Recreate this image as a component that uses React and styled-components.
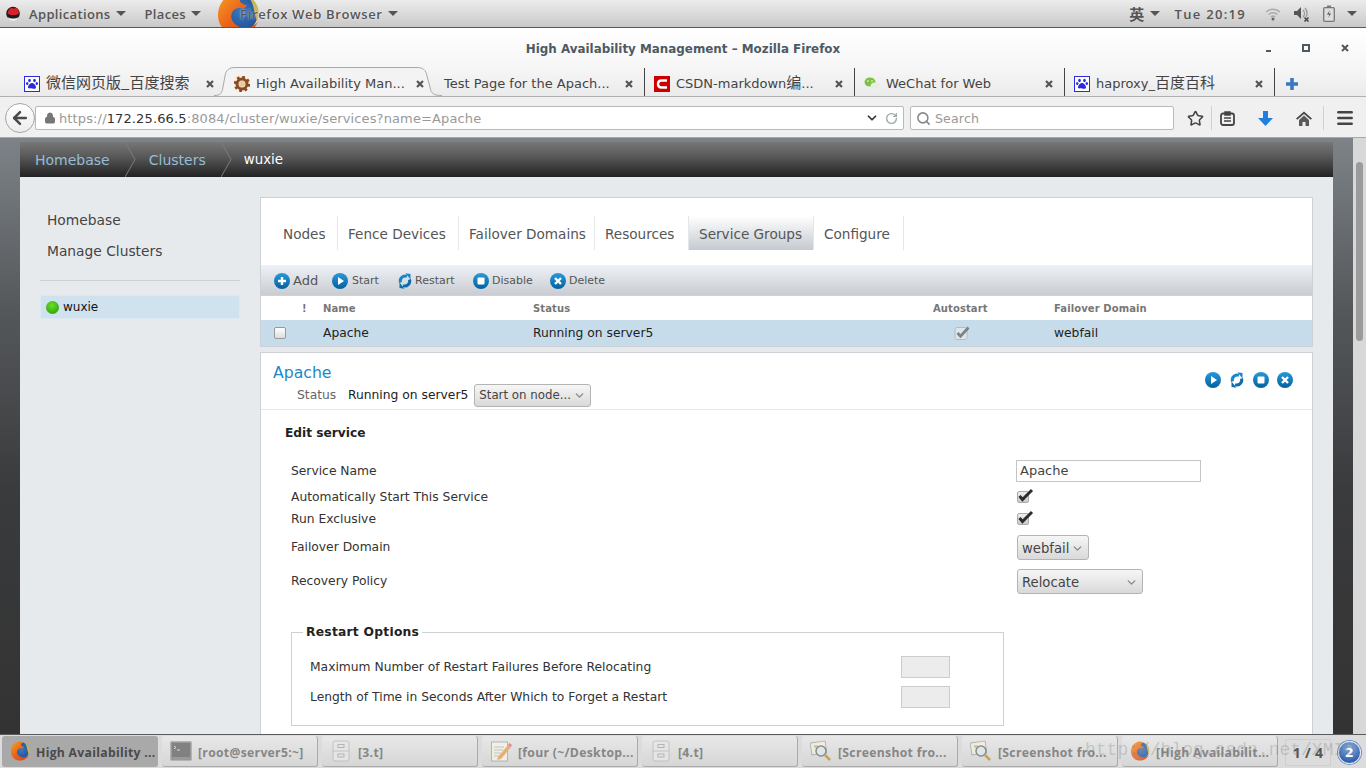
import styled, { createGlobalStyle } from "styled-components";
import { Star, Menu as MenuIcon, Search, Lock, ChevronDown, RotateCw, ArrowLeft } from "lucide-react";

const Global = createGlobalStyle`
  html, body { margin: 0; padding: 0; height: 100%; overflow: hidden; }
  * { box-sizing: border-box; }
  body { font-family: "DejaVu Sans", sans-serif; }
  svg { flex: none; }
`;

const Screen = styled.div`
  position: relative;
  width: 1366px;
  height: 768px;
  display: flex;
  flex-direction: column;
  overflow: hidden;
  background: #fff;
`;

// 상단 패널
const TopBar = styled.div`
  position: relative;
  height: 28px;
  flex: none;
  display: flex;
  align-items: center;
  padding: 0 9px 0 6px;
  overflow: hidden;
  background: linear-gradient(#ececec, #c9c9c9);
  border-bottom: 1px solid #585858;
  font-family: "Open Sans", sans-serif;
  font-weight: 600;
  font-size: 13px;
  letter-spacing: 0.35px;
  color: #555;
`;

const PanelItem = styled.span`
  position: relative;
  display: flex;
  align-items: center;
  gap: 5px;
  margin-left: ${(p) => p.$ml || 0}px;
  white-space: nowrap;
  z-index: 1;
  letter-spacing: ${(p) => (p.$halo ? "0.65px" : "inherit")};
  text-shadow: ${(p) => (p.$halo ? "0 0 2px rgba(255, 255, 255, 0.9)" : "none")};
`;

const PanelCjk = styled.span`
  font-family: "Noto Sans CJK SC", sans-serif;
  font-size: 15px;
`;

const PanelClock = styled.span`
  letter-spacing: 1.3px;
`;

const PanelArrow = styled.i`
  width: 0;
  height: 0;
  border-left: 5px solid transparent;
  border-right: 5px solid transparent;
  border-top: 5px solid #555;
`;

const PanelRight = styled.div`
  margin-left: auto;
  display: flex;
  align-items: center;
`;

const PanelLogo = styled.div`
  position: absolute;
  left: 216px;
  top: -8px;
`;

const Browser = styled.div`
  flex: 1;
  min-height: 0;
  display: flex;
  flex-direction: column;
`;

const TitleBar = styled.div`
  position: relative;
  height: 40px;
  flex: none;
  display: flex;
  align-items: flex-end;
  justify-content: center;
  padding-bottom: 12px;
  background: linear-gradient(#fff, #f6f6f6);
  font-weight: bold;
  font-size: 11.9px;
  color: #4d5a63;
`;

const WinButtons = styled.div`
  position: absolute;
  right: 0;
  top: 16px;
  width: 100px;
  height: 12px;
`;

const TabStrip = styled.div`
  height: 29px;
  flex: none;
  display: flex;
  padding-left: 15px;
  background: linear-gradient(#f6f6f6, #ebebeb);
  border-bottom: 1px solid #b0b0b0;
`;

const Tab = styled.div`
  position: relative;
  width: 210px;
  height: 28px;
  display: flex;
  align-items: center;
  padding: 3px 9px 0;
  gap: 6px;
  font-size: 13px;
  color: #444;
  white-space: nowrap;
  border-right: ${(p) => (p.$divider ? "1px solid #444" : "none")};
`;

const TabIcon = styled.span`
  position: relative;
  display: flex;
`;

const TabText = styled.span`
  position: relative;
  flex: 1;
  min-width: 0;
  line-height: 18px;
  font-family: "DejaVu Sans", "Noto Sans CJK SC", sans-serif;
`;

const TabCjk = styled.span`
  font-family: "Noto Sans CJK SC", sans-serif;
  font-size: 15px;
  line-height: 1;
`;

const TabClose = styled.span`
  position: absolute;
  right: 10px;
  top: 11px;
  display: flex;
`;

const TabShape = styled.svg`
  position: absolute;
  left: -11px;
  top: -1px;
`;

const TabPlus = styled.div`
  margin: 8px 0 0 10px;
`;

const NavBar = styled.div`
  height: 41px;
  flex: none;
  display: flex;
  align-items: flex-start;
  padding: 9px 0 0 35px;
  background: #f0f0f0;
  border-bottom: 1px solid #a8a8a8;
`;

const BackButton = styled.div`
  position: absolute;
  left: 5px;
  top: 103px;
  width: 30px;
  height: 30px;
  display: flex;
  align-items: center;
  justify-content: center;
  border-radius: 50%;
  border: 1px solid #a4a4a4;
  background: linear-gradient(#fff, #ededed);
  color: #4a4a4a;
`;

const UrlBox = styled.div`
  width: 869px;
  height: 24px;
  flex: none;
  display: flex;
  align-items: center;
  padding: 0 5px 0 8px;
  background: #fff;
  border: 1px solid #b9b9b9;
  border-radius: 2px;
  font-size: 13px;
  letter-spacing: 0.13px;
  color: #999;
  white-space: nowrap;
`;

const UrlHost = styled.span`
  color: #333;
`;

const UrlTools = styled.div`
  margin-left: auto;
  display: flex;
  align-items: center;
  gap: 6px;
  color: #333;
`;

const SearchBox = styled(UrlBox)`
  width: 264px;
  margin-left: 6px;
  padding-left: 5px;
  gap: 4px;
  font-size: 12.6px;
`;

const NavIcon = styled.div`
  flex: none;
  display: flex;
  align-items: center;
  justify-content: center;
  height: 24px;
  width: ${(p) => p.$w}px;
  color: #444;
  border-right: ${(p) => (p.$line ? "1px solid #d0d0d0" : "none")};
`;

// 페이지 영역
const PageWrap = styled.div`
  flex: 1;
  min-height: 0;
  display: flex;
  background: linear-gradient(#7d8388 0, #55585b 170px, #3a3b3d 350px, #333 100%);
`;

const PageColumn = styled.div`
  width: 1313px;
  margin-left: 20px;
  margin-top: 4px;
  display: flex;
  flex-direction: column;
`;

const Breadcrumb = styled.div`
  height: 35px;
  flex: none;
  display: flex;
  align-items: center;
  padding-left: 15px;
  background: linear-gradient(#777, #5a5a5a 40%, #222);
  font-size: 14px;
`;

const Crumb = styled.span`
  color: ${(p) => (p.$current ? "#fff" : "#94bdd8")};
  font-size: ${(p) => (p.$current ? "13.4px" : "inherit")};
  margin-left: ${(p) => (p.$current ? "-1px" : "0")};
`;

const CrumbSep = styled.svg`
  flex: none;
  margin: 0 13px 0 15px;
`;

const PageBody = styled.div`
  flex: 1;
  min-height: 0;
  display: flex;
  padding-top: 20px;
  background: #e7eaed;
`;

const Sidebar = styled.div`
  width: 240px;
  flex: none;
  padding: 8px 20px 0;
`;

const SideLink = styled.div`
  height: 31px;
  line-height: 31px;
  padding-left: 7px;
  font-size: 13.8px;
  color: #444;
`;

const SideDivider = styled.div`
  height: 1px;
  margin-top: 13px;
  background: #ccd1d6;
`;

const ClusterRow = styled.div`
  height: 24px;
  margin-top: 14px;
  display: flex;
  align-items: center;
  gap: 4px;
  padding-left: 5px;
  background: #d0e2ee;
  border: 1px solid #dce9f2;
  font-size: 12px;
  color: #111;
`;

const StatusDot = styled.i`
  width: 13px;
  height: 13px;
  border-radius: 50%;
  background: radial-gradient(circle at 45% 35%, #6be02c, #2eaa06 75%);
`;

const Main = styled.div`
  width: 1053px;
  flex: none;
`;

const Panel = styled.div`
  background: #fff;
  border: 1px solid #cdd1d5;
  margin-top: ${(p) => p.$mt || 0}px;
  height: ${(p) => (p.$h ? `${p.$h}px` : "auto")};
`;

const NavTabs = styled.div`
  height: 67px;
  display: flex;
  padding: 18px 0 0 12px;
`;

const NavTab = styled.div`
  width: ${(p) => p.$w}px;
  height: 34px;
  line-height: 36px;
  padding-left: 10px;
  font-size: 13.6px;
  color: #555;
  white-space: nowrap;
  background: ${(p) => (p.$active ? "linear-gradient(#fff, #c4cacf)" : "none")};
  border-right: 1px solid #e4e7ea;
`;

const Toolbar = styled.div`
  height: 31px;
  display: flex;
  align-items: center;
  background: linear-gradient(#eef2f8, #c9cdd1);
  border-bottom: 1px solid #d0d3d6;
  padding: 1px 0 0 13px;
`;

const ToolItem = styled.div`
  display: flex;
  align-items: center;
  gap: ${(p) => p.$gap || 4}px;
  width: ${(p) => p.$w}px;
  font-size: ${(p) => p.$size || 11}px;
  color: #555;
`;

const TableRow = styled.div`
  display: grid;
  grid-template-columns: 62px 210px 400px 121px 1fr;
  align-items: center;
  height: ${(p) => p.$h}px;
`;

const HeadRow = styled(TableRow)`
  font-size: 10px;
  font-weight: bold;
  letter-spacing: 0.1px;
  color: #777;
`;

const BodyRow = styled(TableRow)`
  background: #c7dcea;
  font-size: 12.3px;
  color: #222;
`;

const HeadBang = styled.span`
  padding-left: 41px;
`;

const RowCheck = styled.i`
  display: block;
  width: 12px;
  height: 12px;
  margin-left: 13px;
  background: linear-gradient(#fff, #ddd);
  border: 1px solid #999;
  border-radius: 2px;
`;

const AutoCell = styled.div`
  padding-left: 21px;
  display: flex;
`;

const DetailHead = styled.div`
  height: 57px;
  display: flex;
  align-items: center;
  justify-content: space-between;
  padding: 0 19px 0 12px;
  border-bottom: 1px solid #e4e6e8;
`;

const DetailTitle = styled.div`
  font-size: 15.7px;
  line-height: 20px;
  margin-top: 8px;
  color: #1e88c8;
`;

const StatusLine = styled.div`
  display: flex;
  align-items: center;
  height: 24px;
  margin: 0 0 0 24px;
  font-size: 12.3px;
  color: #222;
`;

const StatusLabel = styled.span`
  width: 51px;
  color: #666;
`;

const ActionIcons = styled.div`
  display: flex;
  gap: 8px;
  margin-top: -2px;
`;

const Dropdown = styled.div`
  display: flex;
  align-items: center;
  justify-content: space-between;
  width: ${(p) => p.$w}px;
  height: ${(p) => p.$h || 25}px;
  margin-left: ${(p) => p.$ml || 0}px;
  padding: ${(p) => (p.$size ? "0 4px" : "2px 4px 0")};
  background: linear-gradient(#f6f6f6, #d9d9d9);
  border: 1px solid #b4b4b4;
  border-radius: 3px;
  font-size: ${(p) => p.$size || 13.2}px;
  color: #444;
  white-space: nowrap;
`;

const DetailBody = styled.div`
  padding: 14px 0 0 24px;
`;

const EditHeading = styled.div`
  font-size: 12.2px;
  font-weight: bold;
  line-height: 18px;
  color: #222;
`;

const Form = styled.div`
  margin: 15px 0 0 6px;
`;

const FormRow = styled.div`
  display: grid;
  grid-template-columns: 725px 1fr;
  align-items: center;
  height: ${(p) => p.$h}px;
  font-size: 12.3px;
  color: #333;
`;

const TextBox = styled.div`
  width: 185px;
  height: 22px;
  line-height: 20px;
  padding-left: 3px;
  background: #fff;
  border: 1px solid #c4c4c4;
  font-size: 13px;
  color: #444;
`;

const FormCheck = styled.div`
  position: relative;
  width: 12px;
  height: 12px;
  margin-left: 1px;
  background: linear-gradient(#eee, #ccc);
  border: 1px solid #aaa;
  border-radius: 2px;
`;

const FormCheckMark = styled.svg`
  position: absolute;
  left: 0;
  top: -4px;
`;

const OptionBox = styled.fieldset`
  width: 713px;
  margin: 28px 0 0 0;
  padding: 13px 0 0 18px;
  height: 101px;
  border: 1px solid #cdd1d5;
`;

const OptionLegend = styled.legend`
  margin-left: -7px;
  padding: 0 3px;
  font-size: 12.3px;
  font-weight: bold;
  letter-spacing: 0.25px;
  color: #222;
`;

const OptionRow = styled.div`
  display: grid;
  grid-template-columns: 591px 1fr;
  align-items: center;
  height: 30px;
  font-size: 12.3px;
  color: #333;
`;

const GreyBox = styled.div`
  width: 49px;
  height: 22px;
  background: #ececec;
  border: 1px solid #ccc;
`;

const ScrollTrack = styled.div`
  width: 13px;
  margin-left: 20px;
  flex: none;
  padding: 24px 3px 0;
  background: #d8d8d8;
`;

const ScrollThumb = styled.div`
  height: 179px;
  border-radius: 4px;
  background: #9b9b9b;
`;

// 하단 작업 표시줄
const TaskBar = styled.div`
  position: relative;
  height: 34px;
  flex: none;
  display: flex;
  gap: 4px;
  padding: 1px 0 0 2px;
  background: #dcdcdc;
  border-top: 1px solid #5a5a5a;
  font-family: "Open Sans", sans-serif;
  font-weight: 700;
  font-size: 12.2px;
  letter-spacing: 0.3px;
`;

const TaskButton = styled.div`
  width: 156px;
  height: 31px;
  flex: none;
  display: flex;
  align-items: center;
  gap: 6px;
  padding: 2px 0 0 8px;
  white-space: nowrap;
  overflow: hidden;
  border-radius: 3px;
  background: ${(p) => (p.$active ? "#a9a9a9" : "linear-gradient(#e8e8e8, #d6d6d6)")};
  border-right: 1px solid #aaa;
  border-bottom: 1px solid #aaa;
  color: ${(p) => (p.$active ? "#4a4a4a" : "#868686")};

  svg {
    opacity: ${(p) => (p.$active ? 1 : 0.8)};
    margin-top: -2px;
  }
`;

const Pager = styled.div`
  width: 46px;
  height: 27px;
  margin: 3px 0 0 3px;
  flex: none;
  display: flex;
  align-items: center;
  justify-content: center;
  border: 1px solid #cfcfcf;
  color: #555;
  font-size: 14px;
`;

const Badge = styled.div`
  width: 23px;
  height: 23px;
  flex: none;
  margin: 5px 0 0 3px;
  display: flex;
  align-items: center;
  justify-content: center;
  border-radius: 50%;
  border: 1px solid #e4ecf6;
  box-shadow: 0 0 0 1px #6f8fbe;
  background: radial-gradient(circle at 50% 25%, #89aee0, #2f62ad 75%);
  font-family: "DejaVu Sans", sans-serif;
  font-size: 13px;
  font-weight: bold;
  color: #fff;
`;

const Watermark = styled.div`
  position: absolute;
  left: 1085px;
  top: 5px;
  font-family: "Liberation Mono", monospace;
  font-weight: normal;
  font-size: 18px;
  letter-spacing: 0;
  color: rgba(120, 120, 120, 0.3);
  white-space: nowrap;
`;

const FirefoxLogo = ({ size, idPrefix }) => (
  <svg width={size} height={size} viewBox="0 0 44 44">
    <defs>
      <radialGradient id={`${idPrefix}Blue`} cx="0.55" cy="0.45" r="0.6">
        <stop offset="0" stopColor="#3a78c2" />
        <stop offset="1" stopColor="#1f4b8e" />
      </radialGradient>
      <linearGradient id={`${idPrefix}Orange`} x1="0" y1="0" x2="1" y2="1">
        <stop offset="0" stopColor="#f7a11f" />
        <stop offset="0.5" stopColor="#e9611c" />
        <stop offset="1" stopColor="#d2461a" />
      </linearGradient>
    </defs>
    <circle cx="23" cy="21" r="19" fill={`url(#${idPrefix}Blue)`} />
    <path d="M32 4c7 4 11 10 10.500 18-.3 4-1 6-1.500 8l-3-12c-1-6-3-10-6-14z" fill="#c9b75a" />
    <path
      d="M20 1C9 3 2 12 2 23c0 12 9 20 20 20 9 0 16-5 20-13-6 6-14 8-20 4-6-3-8-9-6-13 1-3 4-5 8-5 3 1 6 0 7-3-2 0-6-1-7-4 0-2 2-4 5-5-2-2-6-3-9-3z"
      fill={`url(#${idPrefix}Orange)`}
    />
  </svg>
);

const RedHat = () => (
  <svg width="14" height="15" viewBox="0 0 14 15">
    <circle cx="7" cy="7.500" r="6.800" fill="#1c1c1c" />
    <path d="M1.500 11c3.500 2 8 2 11 0-1 2.500-3 3.800-5.500 3.800S2.500 13.500 1.500 11z" fill="#f4f4f4" />
    <path d="M1.500 7.500C2 4 4 2 5.500 2s1.300.6 2.300.6S9.500 1.600 10.500 2s2.500 3 2.500 5.500c-3 2-8.500 2-11.500 0z" fill="#d9232a" />
  </svg>
);

const CloseX = ({ color = "#555" }) => (
  <svg width="10" height="10" viewBox="0 0 10 10">
    <path d="M2 2l6 6M8 2l-6 6" stroke={color} strokeWidth="2.200" />
  </svg>
);

const BaiduIcon = () => (
  <svg width="16" height="16" viewBox="0 0 16 16">
    <rect x="0.500" y="0.500" width="15" height="15" fill="#fff" stroke="#2a2ae0" />
    <g fill="#2a2ae0">
      <ellipse cx="5.500" cy="4.500" rx="1.300" ry="1.800" />
      <ellipse cx="10.500" cy="4.500" rx="1.300" ry="1.800" />
      <ellipse cx="3.200" cy="7.500" rx="1.200" ry="1.500" />
      <ellipse cx="12.800" cy="7.500" rx="1.200" ry="1.500" />
      <path d="M8 7c2 0 4 2.500 4 4.500 0 1.500-2 1.500-4 1s-4 .5-4-1C4 9.500 6 7 8 7z" />
    </g>
  </svg>
);

const GearIcon = () => (
  <svg width="16" height="16" viewBox="0 0 16 16">
    <rect width="16" height="16" fill="#f6f0e6" />
    <circle cx="8" cy="8" r="5" fill="none" stroke="#8a4a22" strokeWidth="3" />
    <circle cx="8" cy="8" r="7" fill="none" stroke="#8a4a22" strokeWidth="2.400" strokeDasharray="2.700 2.800" />
    <circle cx="8" cy="8" r="3" fill="#e9c9a0" />
  </svg>
);

const CsdnIcon = () => (
  <svg width="16" height="16" viewBox="0 0 16 16">
    <rect width="16" height="16" fill="#cc0000" />
    <path d="M13 4.500H7.500C5 4.500 4 6 4 8s1 3.500 3.500 3.500H13" fill="none" stroke="#fff" strokeWidth="2.400" />
  </svg>
);

const WechatIcon = () => (
  <svg width="16" height="16" viewBox="0 0 16 16">
    <ellipse cx="6" cy="6" rx="5.500" ry="4.500" fill="#7dc242" />
    <ellipse cx="11" cy="10" rx="4.500" ry="3.500" fill="#e8eee4" />
    <circle cx="4" cy="5" r="0.800" fill="#fff" />
    <circle cx="8" cy="5" r="0.800" fill="#fff" />
  </svg>
);

const HomeIcon = () => (
  <svg width="16" height="15" viewBox="0 0 16 15">
    <path d="M8 .5L0 7.500l1.300 1.300L8 3l6.700 5.800L16 7.500z" fill="#4a4a4a" />
    <path d="M3 9l5-4.500L13 9v6H9.500v-4h-3v4H3z" fill="#5a5a5a" />
  </svg>
);

const TickMark = () => (
  <FormCheckMark width="16" height="14" viewBox="0 0 16 14">
    <path d="M1.500 8l3 3.500L14 2" fill="none" stroke="#2a2d30" strokeWidth="3" />
  </FormCheckMark>
);

// 파란 원형 액션 아이콘
const ActionIcon = ({ kind, size = 16 }) => {
  const id = `blue-${kind}-${size}`;
  if (kind === "restart") {
    return (
      <svg width={size} height={size} viewBox="0 0 16 16">
        <path d="M3.500 9.500A5 5 0 0 1 10 3.300" fill="none" stroke="#1a86c8" strokeWidth="3" />
        <path d="M8.500 .2L13.500 1v5.500z" fill="#1a86c8" />
        <path d="M12.500 6.500A5 5 0 0 1 6 12.700" fill="none" stroke="#0d6cab" strokeWidth="3" />
        <path d="M7.500 15.800L2.500 15V9.500z" fill="#0d6cab" />
      </svg>
    );
  }
  return (
    <svg width={size} height={size} viewBox="0 0 16 16">
      <defs>
        <linearGradient id={id} x1="0" y1="0" x2="0" y2="1">
          <stop offset="0" stopColor="#2a9ad8" />
          <stop offset="1" stopColor="#04609f" />
        </linearGradient>
      </defs>
      <circle cx="8" cy="8" r="8" fill={`url(#${id})`} />
      {kind === "add" && <path d="M8 4v8M4 8h8" stroke="#fff" strokeWidth="2.400" />}
      {kind === "play" && <path d="M6 4l6 4-6 4z" fill="#fff" />}
      {kind === "stop" && <rect x="4.500" y="4.500" width="7" height="7" rx="1" fill="#fff" />}
      {kind === "delete" && <path d="M5 5l6 6M11 5l-6 6" stroke="#fff" strokeWidth="2.400" />}
    </svg>
  );
};

const TerminalIcon = () => (
  <svg width="22" height="20" viewBox="0 0 22 20">
    <rect x="0.500" y="0.500" width="21" height="19" rx="1" fill="#8a8a8a" stroke="#aaa" />
    <rect x="2" y="2" width="18" height="14" fill="#6a6a6a" />
    <path d="M4 5l2 1.500L4 8M7 9h3" stroke="#ddd" fill="none" />
  </svg>
);

const CabinetIcon = () => (
  <svg width="22" height="22" viewBox="0 0 22 22">
    <rect x="3" y="1" width="16" height="20" rx="2" fill="#e8e8e8" stroke="#bbb" />
    <path d="M3 11h16" stroke="#bbb" />
    <rect x="8" y="4.500" width="6" height="3" fill="none" stroke="#aaa" />
    <rect x="8" y="14" width="6" height="3" fill="none" stroke="#aaa" />
  </svg>
);

const NotepadIcon = () => (
  <svg width="22" height="22" viewBox="0 0 22 22">
    <rect x="1.500" y="2" width="16" height="19" fill="#f6f3e6" stroke="#aaa" />
    <path d="M4 7h10M4 10h9M4 13h7M4 16h6" stroke="#bbb" />
    <path d="M8 17l10-12 3 2-10 12-4 1z" fill="#e5a657" />
    <path d="M18 5l1.500-2 2.500 2-1 2z" fill="#d77" />
  </svg>
);

const ViewerIcon = () => (
  <svg width="22" height="22" viewBox="0 0 22 22">
    <rect x="1" y="2" width="15" height="12" transform="rotate(-8 8 8)" fill="#f3f0e0" stroke="#aaa" />
    <rect x="4" y="5" width="4" height="3" fill="#b7cf8c" />
    <circle cx="11" cy="11" r="5" fill="#dfe8ef" stroke="#777" strokeWidth="1.500" />
    <path d="M15 15l5 5" stroke="#c9922f" strokeWidth="2.500" />
  </svg>
);

const tabs = [
  { id: 1, icon: <BaiduIcon />, title: <TabCjk>微信网页版_百度搜索</TabCjk> },
  { id: 2, icon: <GearIcon />, title: "High Availability Man...", active: true },
  { id: 3, title: "Test Page for the Apach...", divider: true },
  { id: 4, icon: <CsdnIcon />, title: <>CSDN-markdown<TabCjk>编</TabCjk>...</>, divider: true },
  { id: 5, icon: <WechatIcon />, title: "WeChat for Web", divider: true },
  { id: 6, icon: <BaiduIcon />, title: <>haproxy_<TabCjk>百度百科</TabCjk></>, divider: true },
];

const navTabs = [
  { name: "Nodes", width: 65 },
  { name: "Fence Devices", width: 121 },
  { name: "Failover Domains", width: 136 },
  { name: "Resources", width: 94 },
  { name: "Service Groups", width: 125 },
  { name: "Configure", width: 90 },
];

const tasks = [
  { icon: <FirefoxLogo size={20} idPrefix="task1" />, title: "High Availability ...", active: true },
  { icon: <TerminalIcon />, title: "[root@server5:~]" },
  { icon: <CabinetIcon />, title: "[3.t]" },
  { icon: <NotepadIcon />, title: "[four (~/Desktop..." },
  { icon: <CabinetIcon />, title: "[4.t]" },
  { icon: <ViewerIcon />, title: "[Screenshot fro..." },
  { icon: <ViewerIcon />, title: "[Screenshot fro..." },
  { icon: <FirefoxLogo size={20} idPrefix="task2" />, title: "[High Availabilit..." },
];

function TabBackground() {
  return (
    <TabShape width="232" height="29" viewBox="0 0 232 29">
      <path
        d="M0 28.500C6 28.500 8 27 9 20L11 9C12 3 15 .5 21 .5H203C209 .5 212 3 213 9L216 20C217 27 220 28.500 228 28.500"
        fill="#f3f3f3"
        stroke="#a9a9a9"
      />
    </TabShape>
  );
}

function App() {
  return (
    <Screen>
      <Global />
      <TopBar>
        <PanelLogo>
          <FirefoxLogo size={44} idPrefix="panel" />
        </PanelLogo>
        <PanelItem>
          <RedHat />
        </PanelItem>
        <PanelItem $ml={9}>
          Applications <PanelArrow />
        </PanelItem>
        <PanelItem $ml={19}>
          Places <PanelArrow />
        </PanelItem>
        <PanelItem $ml={39} $halo>
          Firefox Web Browser <PanelArrow />
        </PanelItem>
        <PanelRight>
          <PanelItem>
            <PanelCjk>英</PanelCjk>
            <PanelArrow />
          </PanelItem>
          <PanelItem $ml={15}>
            <PanelClock>Tue 20:19</PanelClock>
          </PanelItem>
          <PanelItem $ml={19}>
            <svg width="16" height="14" viewBox="0 0 16 14">
              <path d="M1 5a10 10 0 0 1 14 0M3.500 7.500a6.500 6.500 0 0 1 9 0M6 10a3 3 0 0 1 4 0" fill="none" stroke="#aaa" strokeWidth="1.500" />
              <circle cx="8" cy="12" r="1.500" fill="#666" />
            </svg>
          </PanelItem>
          <PanelItem $ml={12}>
            <svg width="17" height="16" viewBox="0 0 17 16">
              <path d="M1 5h3l4-4v12l-4-4H1z" fill="#555" />
              <path d="M10 4a5 5 0 0 1 0 7M12 2a8 8 0 0 1 1 9" fill="none" stroke="#999" strokeWidth="1.300" />
              <path d="M11.500 11.500l4 4M15.500 11.500l-4 4" stroke="#444" strokeWidth="1.500" />
            </svg>
          </PanelItem>
          <PanelItem $ml={13}>
            <svg width="12" height="17" viewBox="0 0 12 17">
              <rect x="0.700" y="2.700" width="10.600" height="13.600" rx="1" fill="#ddd" stroke="#777" strokeWidth="1.300" />
              <rect x="4" y="0.500" width="4" height="2" fill="#777" />
              <path d="M7 5l-3 4.500h2.500L5 13l3-4.500H5.500z" fill="#444" />
            </svg>
          </PanelItem>
          <PanelItem $ml={12}>
            <PanelArrow />
          </PanelItem>
        </PanelRight>
      </TopBar>

      <Browser>
        <TitleBar>
          High Availability Management – Mozilla Firefox
          <WinButtons>
            <svg width="100" height="12" viewBox="0 0 100 12">
              <rect x="0" y="6" width="5" height="2" fill="#4d5a63" />
              <rect x="37" y="1" width="6" height="6" fill="none" stroke="#4d5a63" strokeWidth="2" />
              <path d="M76 1L82 7M82 1L76 7" stroke="#4d5a63" strokeWidth="2" />
            </svg>
          </WinButtons>
        </TitleBar>

        <TabStrip>
          {tabs.map((tab) => (
            <Tab key={tab.id} $divider={tab.divider}>
              {tab.active && <TabBackground />}
              {tab.icon && <TabIcon>{tab.icon}</TabIcon>}
              <TabText>{tab.title}</TabText>
              <TabClose>
                <CloseX />
              </TabClose>
            </Tab>
          ))}
          <TabPlus>
            <svg width="14" height="14" viewBox="0 0 14 14">
              <path d="M7 1v12M1 7h12" stroke="#3a78c2" strokeWidth="3.600" />
            </svg>
          </TabPlus>
        </TabStrip>

        <NavBar>
          <BackButton>
            <ArrowLeft size={20} strokeWidth={3} />
          </BackButton>
          <UrlBox>
            <Lock size={12} fill="#777" color="#777" style={{ marginRight: 3 }} />
            https://<UrlHost>172.25.66.5</UrlHost>:8084/cluster/wuxie/services?name=Apache
            <UrlTools>
              <ChevronDown size={14} strokeWidth={3} />
              <RotateCw size={13} strokeWidth={2.500} color="#9aa" />
            </UrlTools>
          </UrlBox>
          <SearchBox>
            <Search size={15} strokeWidth={2.500} color="#888" />
            Search
          </SearchBox>
          <NavIcon $w={38} $line>
            <Star size={17} strokeWidth={2.200} style={{ marginRight: -6 }} />
          </NavIcon>
          <NavIcon $w={31}>
            <svg width="15" height="15" viewBox="0 0 15 15">
              <rect x="1" y="2.500" width="13" height="11.500" rx="2" fill="none" stroke="#444" strokeWidth="1.800" />
              <path d="M5 1h5v3H5zM4 7h7M4 10h7" stroke="#444" strokeWidth="1.500" fill="#444" />
            </svg>
          </NavIcon>
          <NavIcon $w={45}>
            <svg width="15" height="15" viewBox="0 0 15 15">
              <path d="M5 0h5v7h5l-7.500 8L0 7h5z" fill="#1f7fe0" />
            </svg>
          </NavIcon>
          <NavIcon $w={31}>
            <HomeIcon />
          </NavIcon>
          <NavIcon $w={5} $line />
          <NavIcon $w={42}>
            <MenuIcon size={20} strokeWidth={3} />
          </NavIcon>
        </NavBar>

        <PageWrap>
          <PageColumn>
            <Breadcrumb>
              <Crumb>Homebase</Crumb>
              <CrumbSep width="11" height="35" viewBox="0 0 11 35">
                <path d="M0 0l10 17.500L0 35" fill="none" stroke="#7d7d7d" />
              </CrumbSep>
              <Crumb>Clusters</Crumb>
              <CrumbSep width="11" height="35" viewBox="0 0 11 35">
                <path d="M0 0l10 17.500L0 35" fill="none" stroke="#7d7d7d" />
              </CrumbSep>
              <Crumb $current>wuxie</Crumb>
            </Breadcrumb>

            <PageBody>
              <Sidebar>
                <SideLink>Homebase</SideLink>
                <SideLink>Manage Clusters</SideLink>
                <SideDivider />
                <ClusterRow>
                  <StatusDot />
                  wuxie
                </ClusterRow>
              </Sidebar>

              <Main>
                <Panel>
                  <NavTabs>
                    {navTabs.map((tab) => (
                      <NavTab key={tab.name} $w={tab.width} $active={tab.name === "Service Groups"}>
                        {tab.name}
                      </NavTab>
                    ))}
                  </NavTabs>
                  <Toolbar>
                    <ToolItem $w={58} $size={13} $gap={3}>
                      <ActionIcon kind="add" />
                      Add
                    </ToolItem>
                    <ToolItem $w={65}>
                      <ActionIcon kind="play" />
                      Start
                    </ToolItem>
                    <ToolItem $w={76} $gap={2}>
                      <ActionIcon kind="restart" />
                      Restart
                    </ToolItem>
                    <ToolItem $w={77} $gap={3}>
                      <ActionIcon kind="stop" />
                      Disable
                    </ToolItem>
                    <ToolItem $w={70} $gap={3}>
                      <ActionIcon kind="delete" />
                      Delete
                    </ToolItem>
                  </Toolbar>
                  <HeadRow $h={24}>
                    <HeadBang>!</HeadBang>
                    <span>Name</span>
                    <span>Status</span>
                    <span>Autostart</span>
                    <span>Failover Domain</span>
                  </HeadRow>
                  <BodyRow $h={26}>
                    <RowCheck />
                    <span>Apache</span>
                    <span>Running on server5</span>
                    <AutoCell>
                      <svg width="16" height="14" viewBox="0 0 16 14">
                        <rect x="1" y="1.500" width="12" height="12" rx="2" fill="#dfe5e9" stroke="#b4bcc2" />
                        <path d="M3.500 7l3 3.200L14.500 1.500" fill="none" stroke="#7a828a" strokeWidth="2.700" />
                      </svg>
                    </AutoCell>
                    <span>webfail</span>
                  </BodyRow>
                </Panel>

                <Panel $mt={5} $h={400}>
                  <DetailHead>
                    <div>
                      <DetailTitle>Apache</DetailTitle>
                      <StatusLine>
                        <StatusLabel>Status</StatusLabel>
                        Running on server5
                        <Dropdown $w={117} $h={23} $ml={6} $size={11.8}>
                          Start on node...
                          <ChevronDown size={13} strokeWidth={2.500} color="#888" />
                        </Dropdown>
                      </StatusLine>
                    </div>
                    <ActionIcons>
                      <ActionIcon kind="play" />
                      <ActionIcon kind="restart" />
                      <ActionIcon kind="stop" />
                      <ActionIcon kind="delete" />
                    </ActionIcons>
                  </DetailHead>

                  <DetailBody>
                    <EditHeading>Edit service</EditHeading>
                    <Form>
                      <FormRow $h={28}>
                        <span>Service Name</span>
                        <TextBox>Apache</TextBox>
                      </FormRow>
                      <FormRow $h={24}>
                        <span>Automatically Start This Service</span>
                        <FormCheck>
                          <TickMark />
                        </FormCheck>
                      </FormRow>
                      <FormRow $h={20}>
                        <span>Run Exclusive</span>
                        <FormCheck>
                          <TickMark />
                        </FormCheck>
                      </FormRow>
                      <FormRow $h={36}>
                        <span>Failover Domain</span>
                        <Dropdown $w={72} $ml={1}>
                          webfail
                          <ChevronDown size={13} strokeWidth={2.500} color="#888" />
                        </Dropdown>
                      </FormRow>
                      <FormRow $h={32}>
                        <span>Recovery Policy</span>
                        <Dropdown $w={126} $ml={1}>
                          Relocate
                          <ChevronDown size={13} strokeWidth={2.500} color="#888" />
                        </Dropdown>
                      </FormRow>
                      <OptionBox>
                        <OptionLegend>Restart Options</OptionLegend>
                        <OptionRow>
                          <span>Maximum Number of Restart Failures Before Relocating</span>
                          <GreyBox />
                        </OptionRow>
                        <OptionRow>
                          <span>Length of Time in Seconds After Which to Forget a Restart</span>
                          <GreyBox />
                        </OptionRow>
                      </OptionBox>
                    </Form>
                  </DetailBody>
                </Panel>
              </Main>
            </PageBody>
          </PageColumn>
          <ScrollTrack>
            <ScrollThumb />
          </ScrollTrack>
        </PageWrap>
      </Browser>

      <TaskBar>
        {tasks.map((task, idx) => (
          <TaskButton key={idx} $active={task.active}>
            {task.icon}
            {task.title}
          </TaskButton>
        ))}
        <Pager>1 / 4</Pager>
        <Badge>2</Badge>
        <Watermark>http://blog.csdn.net/XMID</Watermark>
      </TaskBar>
    </Screen>
  );
}

export default App;
